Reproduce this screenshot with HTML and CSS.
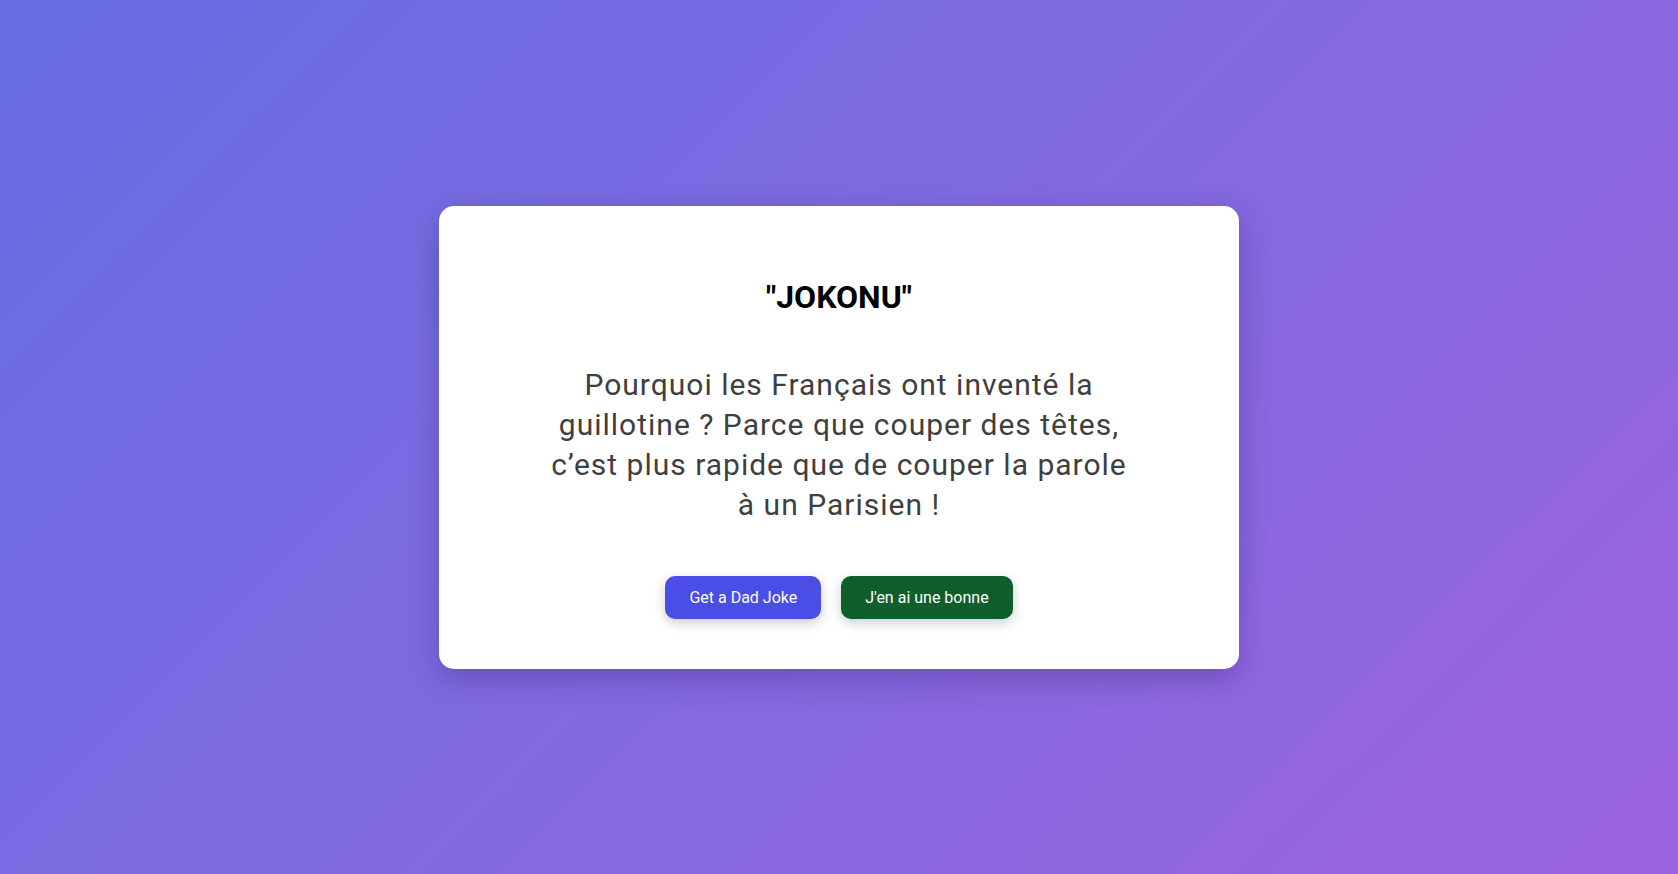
FILE: index.html
```html
<!DOCTYPE html>
<html lang="fr">
<head>
<meta charset="utf-8">
<title>JOKONU</title>
<link rel="stylesheet" href="styles.css">
</head>
<body>
<main class="page">
  <section class="card">
    <h1 class="title">"JOKONU"</h1>
    <p class="joke">Pourquoi les Français ont inventé la guillotine ? Parce que couper des têtes, c’est plus rapide que de couper la parole à un Parisien !</p>
    <div class="actions">
      <button class="btn btn-blue">Get a Dad Joke</button>
      <button class="btn btn-green">J'en ai une bonne</button>
    </div>
  </section>
</main>
</body>
</html>
```
FILE: styles.css
```css
html, body {
  margin: 0;
  height: 100%;
}
body {
  font-family: Roboto, "Liberation Sans", sans-serif;
  background: linear-gradient(135deg, #676ee2 0%, #9c65df 100%);
}
.page {
  height: 100%;
  display: flex;
  align-items: center;
  justify-content: center;
}
.card {
  width: 800px;
  box-sizing: border-box;
  padding: 51px 50px 50px;
  background: #fff;
  border-radius: 15px;
  box-shadow: 0 10px 30px rgba(40, 20, 90, 0.3);
  display: flex;
  flex-direction: column;
  align-items: center;
  text-align: center;
}
.title {
  margin: 21px 0;
  font-size: 32px;
  font-weight: 700;
  color: #000;
}
.joke {
  margin: 28px 0 51px;
  max-width: 590px;
  font-size: 30px;
  line-height: 40px;
  letter-spacing: 1px;
  color: #3f3f3f;
}
.actions {
  display: flex;
  gap: 20px;
}
.btn {
  font-family: Roboto, "Liberation Sans", sans-serif;
  font-size: 16px;
  color: #fff;
  border: none;
  border-radius: 10px;
  height: 43px;
  padding: 0 24px;
  box-shadow: 0 4px 12px rgba(0, 0, 0, 0.2);
  cursor: pointer;
}
.btn-blue {
  background: #4a4de6;
}
.btn-green {
  background: #0f5e2c;
}
```
